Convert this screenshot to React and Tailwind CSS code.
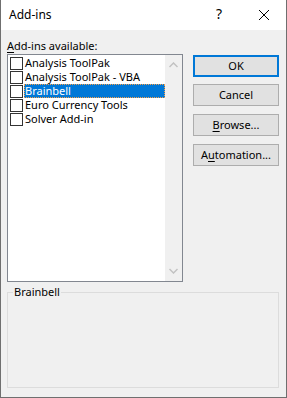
import React from "react";

const font = { fontFamily: '"Noto Sans", "Liberation Sans", sans-serif' };

function Check() {
  return <div className="w-[13px] h-[13px] border border-[#333333] bg-white shrink-0" />;
}

function Row({ label, selected }) {
  return (
    <div className="flex items-center h-[14px] pl-[2px] leading-[14px]">
      <Check />
      <div
        className={
          "ml-[1px] flex-1 h-[14px] flex items-center pl-[1px] leading-[14px] whitespace-nowrap " +
          (selected
            ? "bg-[#0078d7] text-white outline-1 outline-dotted outline-offset-[-1px] outline-[#f5a04a]"
            : "text-black")
        }
      >
        {label}
      </div>
    </div>
  );
}

function Btn({ children, primary }) {
  return (
    <div
      className={
        "h-[22px] w-[86px] bg-[#e1e1e1] flex items-center justify-center text-[11px] leading-[14px] text-black " +
        (primary ? "border-2 border-[#0078d7]" : "border border-[#adadad]")
      }
    >
      {children}
    </div>
  );
}

export default function App() {
  const items = [
    "Analysis ToolPak",
    "Analysis ToolPak - VBA",
    "Brainbell",
    "Euro Currency Tools",
    "Solver Add-in",
  ];
  return (
    <div
      style={font}
      className="w-[287px] h-[398px] flex flex-col bg-[#f0f0f0] border-l border-r border-b border-[#6f6f6f] text-[11px] text-black"
    >
      <div className="h-[30px] bg-white flex items-center shrink-0 relative">
        <span className="ml-[8px] text-[12px]">Add-ins</span>
        <span className="absolute left-[215px] top-[6px] text-[14px] leading-[16px]">?</span>
        <svg className="absolute left-[257px] top-[9px]" width="12" height="12" viewBox="0 0 12 12">
          <path d="M1 1 L11 11 M11 1 L1 11" stroke="#000" strokeWidth="1" fill="none" />
        </svg>
      </div>
      <div className="flex pl-[6px]">
        <div className="flex flex-col">
          <div className="h-[17px] mt-[7px] leading-[17px]">
            <span className="underline underline-offset-2">A</span>dd-ins available:
          </div>
          <div className="w-[176px] h-[228px] border border-[#828790] bg-white flex">
            <div className="flex-1 pt-[1px]">
              {items.map((it) => (
                <Row key={it} label={it} selected={it === "Brainbell"} />
              ))}
            </div>
            <div className="w-[17px] bg-[#f0f0f0] flex flex-col items-center justify-between py-[7px]">
              <svg width="9" height="6" viewBox="0 0 9 6">
                <path d="M0.5 5 L4.5 1 L8.5 5" stroke="#c2c2c2" strokeWidth="1.5" fill="none" />
              </svg>
              <svg width="9" height="6" viewBox="0 0 9 6">
                <path d="M0.5 1 L4.5 5 L8.5 1" stroke="#c2c2c2" strokeWidth="1.5" fill="none" />
              </svg>
            </div>
          </div>
        </div>
        <div className="flex flex-col ml-[10px] mt-[25px] gap-[8px]">
          <Btn primary>OK</Btn>
          <div className="-mt-[1px]">
            <Btn>Cancel</Btn>
          </div>
          <Btn>
            <span className="underline underline-offset-2">B</span>rowse...
          </Btn>
          <Btn>
            A<span className="underline underline-offset-2">u</span>tomation...
          </Btn>
        </div>
      </div>
      <div className="ml-[6px] mt-[10px] w-[272px] h-[96px] border border-[#dcdcdc] relative">
        <span className="absolute left-[5px] top-[-9px] bg-[#f0f0f0] px-[1px] leading-[16px]">Brainbell</span>
      </div>
    </div>
  );
}
